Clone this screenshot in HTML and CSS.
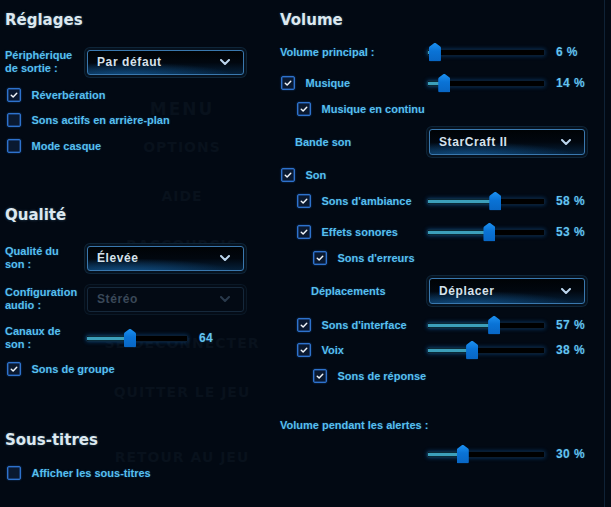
FILE: index.html
```html
<!DOCTYPE html>
<html lang="fr">
<head>
<meta charset="utf-8">
<title>Options audio</title>
<link rel="stylesheet" href="styles.css">
</head>
<body>
<div class="ghost">
  <div class="g g-menu">MENU</div>
  <div class="g">OPTIONS</div>
  <div class="g">AIDE</div>
  <div class="g">RACCOURCIS</div>
  <div class="g">GÉNÉRIQUE</div>
  <div class="g">SE DÉCONNECTER</div>
  <div class="g">QUITTER LE JEU</div>
  <div class="g g-last">RETOUR AU JEU</div>
</div>
<div class="page">
  <section class="col left">
    <h2 class="title">Réglages</h2>
    <div class="frow mt17">
      <div class="flabel">Périphérique<br>de sortie :</div>
      <div class="select"><span>Par défaut</span><svg class="chev" viewBox="0 0 10 6"><polyline points="1,1 5,5 9,1"/></svg></div>
    </div>
    <div class="check mt8"><span class="box on"><svg viewBox="0 0 14 14"><polyline points="3.8,7.2 6,9.3 10.2,5"/></svg></span>Réverbération</div>
    <div class="check mt1"><span class="box"></span>Sons actifs en arrière-plan</div>
    <div class="check mt2"><span class="box"></span>Mode casque</div>

    <h2 class="title mt45">Qualité</h2>
    <div class="frow mt18">
      <div class="flabel">Qualité du<br>son :</div>
      <div class="select"><span>Élevée</span><svg class="chev" viewBox="0 0 10 6"><polyline points="1,1 5,5 9,1"/></svg></div>
    </div>
    <div class="frow mt15">
      <div class="flabel">Configuration<br>audio :</div>
      <div class="select disabled"><span>Stéréo</span><svg class="chev" viewBox="0 0 10 6"><polyline points="1,1 5,5 9,1"/></svg></div>
    </div>
    <div class="frow mt13">
      <div class="flabel narrow">Canaux de<br>son :</div>
      <div class="slider short" style="--v:43%"><div class="fill"></div><div class="thumb"></div></div>
      <div class="val">64</div>
    </div>
    <div class="check mt6"><span class="box on"><svg viewBox="0 0 14 14"><polyline points="3.8,7.2 6,9.3 10.2,5"/></svg></span>Sons de groupe</div>

    <h2 class="title mt47">Sous-titres</h2>
    <div class="check mt9"><span class="box"></span>Afficher les sous-titres</div>
  </section>

  <section class="col right">
    <h2 class="title">Volume</h2>
    <div class="srow mt8">
      <div class="lab">Volume principal :</div>
      <div class="slider" style="--v:6%"><div class="fill"></div><div class="thumb"></div></div>
      <div class="val">6 %</div>
    </div>
    <div class="srow mt7">
      <div class="lab"><span class="box on"><svg viewBox="0 0 14 14"><polyline points="3.8,7.2 6,9.3 10.2,5"/></svg></span>Musique</div>
      <div class="slider" style="--v:14%"><div class="fill"></div><div class="thumb"></div></div>
      <div class="val">14 %</div>
    </div>
    <div class="check rc l2 mt2"><span class="box on"><svg viewBox="0 0 14 14"><polyline points="3.8,7.2 6,9.3 10.2,5"/></svg></span>Musique en continu</div>
    <div class="drow mt9">
      <div class="dlab l1">Bande son</div>
      <div class="select wide"><span>StarCraft II</span><svg class="chev" viewBox="0 0 10 6"><polyline points="1,1 5,5 9,1"/></svg></div>
    </div>
    <div class="check rc mt9"><span class="box on"><svg viewBox="0 0 14 14"><polyline points="3.8,7.2 6,9.3 10.2,5"/></svg></span>Son</div>
    <div class="srow mt2">
      <div class="lab l2"><span class="box on"><svg viewBox="0 0 14 14"><polyline points="3.8,7.2 6,9.3 10.2,5"/></svg></span>Sons d'ambiance</div>
      <div class="slider" style="--v:58%"><div class="fill"></div><div class="thumb"></div></div>
      <div class="val">58 %</div>
    </div>
    <div class="srow mt7">
      <div class="lab l2"><span class="box on"><svg viewBox="0 0 14 14"><polyline points="3.8,7.2 6,9.3 10.2,5"/></svg></span>Effets sonores</div>
      <div class="slider" style="--v:53%"><div class="fill"></div><div class="thumb"></div></div>
      <div class="val">53 %</div>
    </div>
    <div class="check rc l3 mt2"><span class="box on"><svg viewBox="0 0 14 14"><polyline points="3.8,7.2 6,9.3 10.2,5"/></svg></span>Sons d'erreurs</div>
    <div class="drow mt9">
      <div class="dlab l2">Déplacements</div>
      <div class="select wide"><span>Déplacer</span><svg class="chev" viewBox="0 0 10 6"><polyline points="1,1 5,5 9,1"/></svg></div>
    </div>
    <div class="srow mt10">
      <div class="lab l2"><span class="box on"><svg viewBox="0 0 14 14"><polyline points="3.8,7.2 6,9.3 10.2,5"/></svg></span>Sons d'interface</div>
      <div class="slider" style="--v:57%"><div class="fill"></div><div class="thumb"></div></div>
      <div class="val">57 %</div>
    </div>
    <div class="srow mt1">
      <div class="lab l2"><span class="box on"><svg viewBox="0 0 14 14"><polyline points="3.8,7.2 6,9.3 10.2,5"/></svg></span>Voix</div>
      <div class="slider" style="--v:38%"><div class="fill"></div><div class="thumb"></div></div>
      <div class="val">38 %</div>
    </div>
    <div class="check rc l3 mt2"><span class="box on"><svg viewBox="0 0 14 14"><polyline points="3.8,7.2 6,9.3 10.2,5"/></svg></span>Sons de réponse</div>
    <div class="srow mt25">
      <div class="lab wide-lab">Volume pendant les alertes :</div>
    </div>
    <div class="srow mt5">
      <div class="lab"></div>
      <div class="slider" style="--v:30%"><div class="fill"></div><div class="thumb"></div></div>
      <div class="val">30 %</div>
    </div>
  </section>
</div>
</body>
</html>
```

FILE: styles.css
```css
* { box-sizing: border-box; }

html, body {
  margin: 0;
  padding: 0;
}

body {
  width: 611px;
  height: 507px;
  overflow: hidden;
  position: relative;
  background: #020913;
  font-family: "Liberation Sans", Arial, sans-serif;
  font-weight: bold;
  font-size: 11px;
  color: #57bfee;
}

/* faint menu behind the options panel */
.ghost {
  position: absolute;
  left: 0;
  top: 0;
  width: 364px;
  padding-top: 99px;
  display: flex;
  flex-direction: column;
  align-items: center;
  gap: 29px;
  font-family: "DejaVu Sans", sans-serif;
  font-size: 14px;
  letter-spacing: 1px;
  color: #08111c;
  z-index: 0;
}
.g {
  height: 20px;
  line-height: 20px;
  white-space: nowrap;
}
.g-menu {
  font-size: 17px;
  letter-spacing: 2px;
  margin-bottom: -11px;
}
.g-last { margin-top: 16px; }

.page {
  position: relative;
  z-index: 1;
  width: 605px;
  height: 507px;
  padding-left: 5px;
  border-right: 1px solid #0f2236;
  display: grid;
  grid-template-columns: 275px 1fr;
}

.col {
  display: flex;
  flex-direction: column;
  padding-top: 8px;
}

.title {
  margin: 0;
  height: 24px;
  line-height: 24px;
  font-family: "DejaVu Sans", sans-serif;
  font-weight: bold;
  font-size: 15px;
  color: #dce8ef;
  text-shadow: 0 0 3px rgba(130, 190, 230, 0.35);
}

.lab, .flabel, .dlab, .check, .val {
  text-shadow: 0 0 2px rgba(40, 150, 230, 0.35);
}

/* form rows */
.frow {
  height: 26px;
  display: flex;
  align-items: center;
}
.flabel {
  width: 82px;
  line-height: 13px;
  flex: none;
}
.flabel.narrow { width: 81px; }

.check {
  height: 24px;
  display: flex;
  align-items: center;
  padding-left: 2px;
  white-space: nowrap;
}
.check.rc { padding-left: 1px; }
.check.rc.l2 { padding-left: 17px; }
.check.rc.l3 { padding-left: 33px; }

.box {
  width: 14px;
  height: 14px;
  flex: none;
  margin-right: 10.5px;
  border: 1px solid #2e72cc;
  border-radius: 2px;
  background: #0a1930;
  box-shadow: 0 0 2px rgba(40, 120, 220, 0.55), inset 0 0 0 0.5px #245fb0;
  display: flex;
}
.box svg {
  width: 12px;
  height: 12px;
}
.box polyline {
  fill: none;
  stroke: #f2f6fa;
  stroke-width: 1.7;
  stroke-linecap: round;
  stroke-linejoin: round;
}

/* selects */
.select {
  width: 157px;
  height: 25px;
  flex: none;
  border: 1px solid #3a78ae;
  border-radius: 3px;
  box-shadow: 0 0 0 2px #06121f, 0 0 0 3px #0e2538;
  background:
    radial-gradient(ellipse 70% 60% at 25% 110%, rgba(20, 90, 150, 0.8), rgba(20, 90, 150, 0) 100%),
    linear-gradient(180deg, #000306 0%, #01070f 50%, #05203a 100%);
  display: flex;
  align-items: center;
  justify-content: space-between;
  padding: 0 13px 0 9px;
  color: #d6e2ec;
  font-size: 12px;
  letter-spacing: 0.6px;
  text-shadow: none;
}
.select.wide {
  width: 156px;
  height: 26px;
}
.chev {
  width: 10px;
  height: 6px;
}
.chev polyline {
  fill: none;
  stroke: #bcd6ee;
  stroke-width: 2;
  stroke-linecap: round;
  stroke-linejoin: round;
}
.select.disabled {
  border-color: #15283b;
  background: #030a14;
  box-shadow: 0 0 0 2px #040c17, 0 0 0 3px #0a1826;
  color: #3a4858;
}
.select.disabled .chev polyline { stroke: #2a3a4c; }

/* right column rows */
.srow {
  height: 24px;
  display: grid;
  grid-template-columns: 147px 118px auto;
  align-items: center;
}
.lab {
  display: flex;
  align-items: center;
  white-space: nowrap;
  padding-left: 1px;
}
.lab.l2 { padding-left: 17px; }
.lab.wide-lab {
  grid-column: 1 / 3;
  padding-left: 0;
}
.srow > .lab:not(:has(.box)) { padding-left: 0; }

.drow {
  height: 24px;
  display: flex;
  align-items: center;
}
.dlab { width: 149px; flex: none; }
.dlab.l1 { padding-left: 15px; }
.dlab.l2 { padding-left: 31px; }

/* sliders */
.slider {
  position: relative;
  width: 118px;
  height: 7px;
  background: #000;
  border: 1px solid #0a1e33;
  border-radius: 1px;
  box-shadow: 0 0 4px rgba(20, 110, 200, 0.45);
}
.slider.short {
  width: 102px;
  flex: none;
}
.fill {
  position: absolute;
  left: 0;
  top: 1px;
  height: 3px;
  width: var(--v);
  background: #3c9fba;
  box-shadow: 0 0 3px rgba(40, 150, 200, 0.8);
}
.thumb {
  position: absolute;
  left: var(--v);
  top: 50%;
  width: 12px;
  height: 19px;
  transform: translate(-50%, -50%);
  background: linear-gradient(180deg, #1d92f2 0%, #0a73d6 45%, #0866c4 100%);
  clip-path: path("M0 5.5 Q0 4.5 1 3.8 L5 0.7 Q6 0 7 0.7 L11 3.8 Q12 4.5 12 5.5 L12 17.5 Q12 19 10.5 19 L1.5 19 Q0 19 0 17.5 Z");
}

.val {
  margin-left: 11px;
  font-size: 12px;
  color: #64c4f0;
  white-space: nowrap;
  letter-spacing: 0.4px;
}

/* spacing utilities */
.mt1 { margin-top: 1px; }
.mt2 { margin-top: 2px; }
.mt5 { margin-top: 5px; }
.mt6 { margin-top: 6px; }
.mt7 { margin-top: 7px; }
.mt8 { margin-top: 8px; }
.mt9 { margin-top: 9px; }
.mt10 { margin-top: 10px; }
.mt13 { margin-top: 13px; }
.mt15 { margin-top: 15px; }
.mt17 { margin-top: 17px; }
.mt18 { margin-top: 18px; }
.mt25 { margin-top: 25px; }
.mt45 { margin-top: 45px; }
.mt47 { margin-top: 47px; }
```
